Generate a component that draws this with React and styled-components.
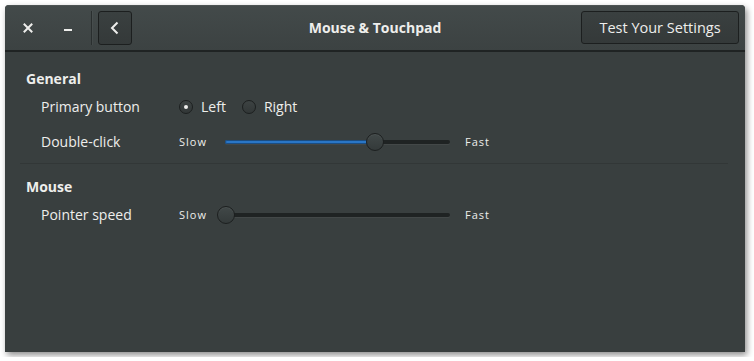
import styled, { createGlobalStyle } from 'styled-components';

const GlobalStyle = createGlobalStyle`
    html, body {
        margin: 0;
        padding: 0;
        background: #ffffff;
    }
    body {
        font-family: "Open Sans", "DejaVu Sans", sans-serif;
        color: #eeeeec;
    }
`;

const Slider = ({ value }) => (
    <SliderRow>
        <SpeedLabel>Slow</SpeedLabel>
        <Track>
            <Fill style={{ width: `${value * 100}%` }} />
            <Knob style={{ left: `${value * 100}%` }} />
        </Track>
        <SpeedLabel>Fast</SpeedLabel>
    </SliderRow>
);

const App = () => {
    return (
        <>
            <GlobalStyle />
            <Window>
                <HeaderBar>
                    <HeaderLeft>
                        <WmButton>
                            <svg width="10" height="10" viewBox="0 0 10 10">
                                <path d="M1.5 1.5 L8.5 8.5 M8.5 1.5 L1.5 8.5" stroke="#eeeeec" strokeWidth="2" strokeLinecap="square" />
                            </svg>
                        </WmButton>
                        <WmButton>
                            <svg width="10" height="10" viewBox="0 0 10 10">
                                <path d="M1 7 H9" stroke="#eeeeec" strokeWidth="2" />
                            </svg>
                        </WmButton>
                        <Divider />
                        <BackButton>
                            <svg width="12" height="14" viewBox="0 0 12 14">
                                <path d="M8.5 1.5 L3 7 L8.5 12.5" fill="none" stroke="#eeeeec" strokeWidth="2" />
                            </svg>
                        </BackButton>
                    </HeaderLeft>
                    <Title>Mouse &amp; Touchpad</Title>
                    <HeaderRight>
                        <TextButton>Test Your Settings</TextButton>
                    </HeaderRight>
                </HeaderBar>

                <Content>
                    <SectionTitle>General</SectionTitle>
                    <Row>
                        <RowLabel>Primary button</RowLabel>
                        <RadioGroup>
                            <RadioOption>
                                <Radio checked />
                                Left
                            </RadioOption>
                            <RadioOption>
                                <Radio />
                                Right
                            </RadioOption>
                        </RadioGroup>
                    </Row>
                    <Row>
                        <RowLabel>Double-click</RowLabel>
                        <Slider value={0.665} />
                    </Row>
                    <Separator />
                    <SectionTitle>Mouse</SectionTitle>
                    <Row>
                        <RowLabel>Pointer speed</RowLabel>
                        <Slider value={0.005} />
                    </Row>
                </Content>
            </Window>
        </>
    );
};

export default App;

//style component

const Window = styled.div`
    margin: 5px;
    width: 740px;
    height: 347px;
    background: #393f3f;
    border-radius: 4px 4px 0 0;
    box-shadow: 2px 3px 6px rgba(0, 0, 0, 0.45);
    display: flex;
    flex-direction: column;
    overflow: hidden;
`;

const HeaderBar = styled.div`
    height: 45px;
    flex-shrink: 0;
    display: grid;
    grid-template-columns: 1fr auto 1fr;
    align-items: center;
    padding: 0 6px;
    background: linear-gradient(to bottom, #434a4a, #3c4242);
    border-bottom: 2px solid #1f2323;
    box-shadow: inset 0 1px 0 rgba(255, 255, 255, 0.05);
`;

const HeaderLeft = styled.div`
    display: flex;
    align-items: center;
    gap: 6px;
`;

const HeaderRight = styled.div`
    display: flex;
    justify-content: flex-end;
`;

const WmButton = styled.div`
    width: 34px;
    height: 34px;
    display: flex;
    align-items: center;
    justify-content: center;
`;

const Divider = styled.div`
    width: 1px;
    height: 34px;
    background: #2a2f2f;
    box-shadow: 1px 0 0 rgba(255, 255, 255, 0.04);
`;

const BackButton = styled.div`
    width: 32px;
    height: 32px;
    border: 1px solid #1c1f1f;
    border-radius: 3px;
    background: linear-gradient(to bottom, #3a4040, #343939);
    display: flex;
    align-items: center;
    justify-content: center;
`;

const Title = styled.div`
    font-size: 14px;
    font-weight: 700;
    color: #eeeeec;
`;

const TextButton = styled.div`
    width: 156px;
    height: 31px;
    border: 1px solid #1c1f1f;
    border-radius: 3px;
    background: linear-gradient(to bottom, #3a4040, #343939);
    display: flex;
    align-items: center;
    justify-content: center;
    font-size: 14.5px;
    color: #eeeeec;
`;

const Content = styled.div`
    padding-top: 17px;
    display: flex;
    flex-direction: column;
`;

const SectionTitle = styled.div`
    height: 20px;
    line-height: 20px;
    padding-left: 21px;
    font-size: 14px;
    font-weight: 700;
`;

const Row = styled.div`
    height: 35px;
    display: flex;
    align-items: center;
    padding-left: 36px;
`;

const RowLabel = styled.div`
    width: 138px;
    font-size: 14px;
`;

const RadioGroup = styled.div`
    display: flex;
    align-items: center;
    gap: 16px;
`;

const RadioOption = styled.div`
    display: flex;
    align-items: center;
    gap: 8px;
    font-size: 14px;
`;

const Radio = styled.span`
    width: 14px;
    height: 14px;
    box-sizing: border-box;
    border-radius: 50%;
    border: 1px solid #1c1f1f;
    background: linear-gradient(to bottom, #3d4343, #323737);
    display: flex;
    align-items: center;
    justify-content: center;

    &::after {
        content: '';
        width: 4px;
        height: 4px;
        border-radius: 50%;
        background: #eeeeec;
        display: ${(p) => (p.checked ? 'block' : 'none')};
    }
`;

const SliderRow = styled.div`
    display: flex;
    align-items: center;
`;

const SpeedLabel = styled.span`
    font-size: 11px;
    color: #eeeeec;
    letter-spacing: 1px;
`;

const Track = styled.div`
    position: relative;
    width: 225px;
    height: 4px;
    margin: 0 15px 0 18px;
    border-radius: 2px;
    background: #1f2323;
    box-shadow: 0 1px 0 rgba(255, 255, 255, 0.05);
`;

const Fill = styled.div`
    height: 100%;
    border-radius: 2px;
    background: #2a76c6;
    box-shadow: inset 0 0 0 1px #1b4d82;
`;

const Knob = styled.div`
    position: absolute;
    top: 50%;
    width: 18px;
    height: 18px;
    box-sizing: border-box;
    margin-left: -9px;
    margin-top: -9px;
    border-radius: 50%;
    border: 1px solid #1c1f1f;
    background: linear-gradient(to bottom, #414848, #343a3a);
    box-shadow: inset 0 1px 0 rgba(255, 255, 255, 0.06);
`;

const Separator = styled.div`
    height: 1px;
    margin: 4px 17px 13px 15px;
    background: #323737;
`;
